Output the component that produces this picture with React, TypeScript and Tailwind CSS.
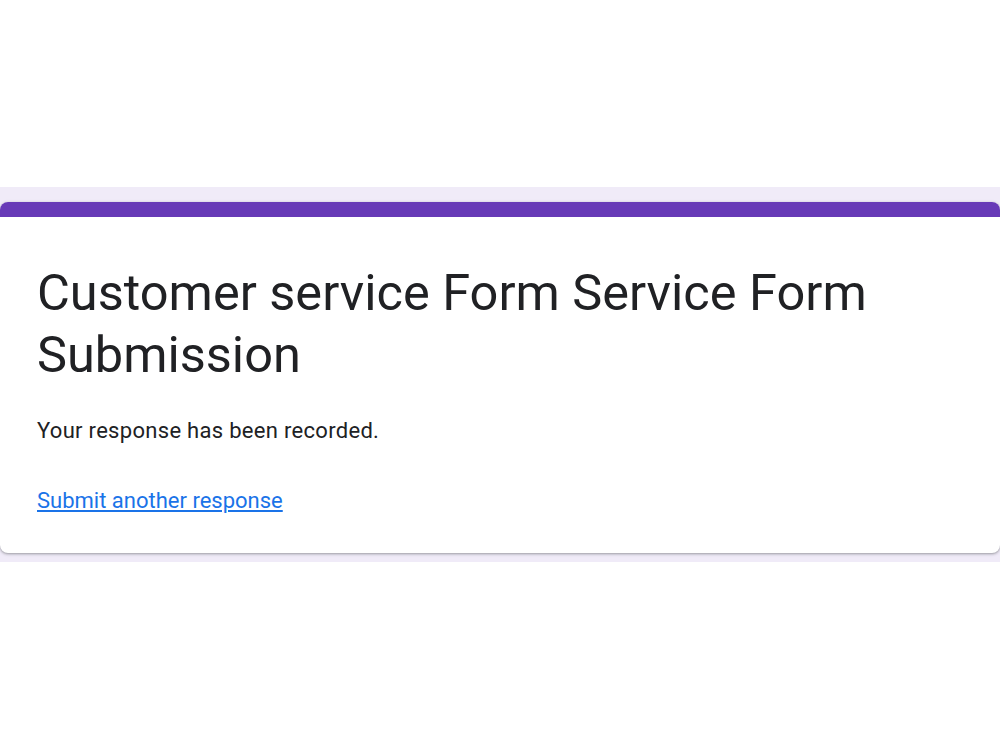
export default function App() {
  return (
    <div className="min-h-[750px] bg-white pt-[187px] font-['Roboto',sans-serif]">
      {/* themed backdrop band behind the confirmation card */}
      <div className="bg-[#f0ebf8] pt-[15px] pb-[9px]">
        <div className="overflow-hidden rounded-lg bg-white shadow-[0_1px_2px_rgba(60,64,67,0.3),0_1px_3px_1px_rgba(60,64,67,0.15)]">
          <div className="h-[15px] bg-[#673ab7]" />
          <div className="px-[37px] pt-[45px] pb-[37px]">
            <h1 className="text-[50.5px] leading-[62px] font-normal text-[#202124]">
              Customer service Form Service Form Submission
            </h1>
            <p className="mt-[30px] text-[22px] leading-[30px] tracking-[0.3px] text-[#202124]">
              Your response has been recorded.
            </p>
            <a
              href="#"
              className="mt-[40px] inline-block text-[22px] leading-[30px] text-[#1a73e8] underline"
            >
              Submit another response
            </a>
          </div>
        </div>
      </div>
    </div>
  );
}
